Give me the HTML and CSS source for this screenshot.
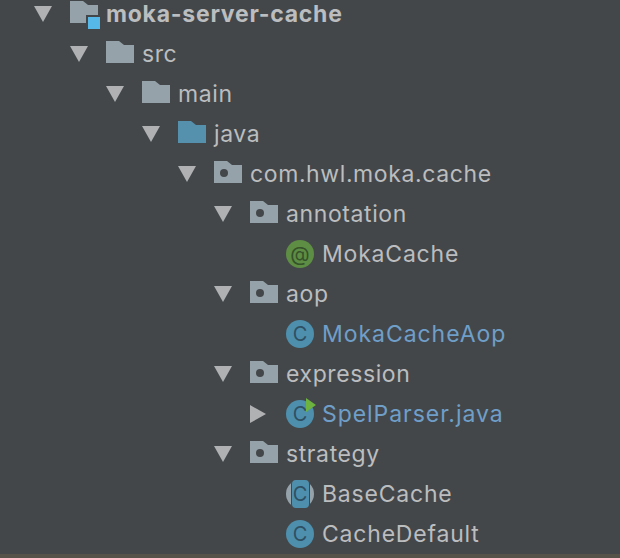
FILE: index.html
```html
<!DOCTYPE html>
<html lang="en">
<head>
<meta charset="utf-8">
<title>Project tree</title>
<link rel="stylesheet" href="styles.css">
</head>
<body>
<svg class="defs" width="0" height="0" aria-hidden="true">
  <defs>
    <path id="folder" d="M0 0H13L18 4H28V22H0Z"/>
    <path id="arrow-down" d="M0 0H18L9 16Z"/>
    <path id="arrow-right" d="M0 0L16 9L0 18Z"/>
  </defs>
</svg>
<main class="tree">
  <div class="row d0">
    <svg class="arrow" viewBox="0 0 18 16"><use href="#arrow-down"/></svg>
    <svg class="icon module" viewBox="0 0 32 30"><use href="#folder" class="fill-folder" y="2"/><rect x="16" y="16" width="16" height="16" class="fill-bg"/><rect x="18" y="18" width="12" height="12" class="fill-sky"/></svg>
    <span class="label strong">moka-server-cache</span>
  </div>
  <div class="row d1">
    <svg class="arrow" viewBox="0 0 18 16"><use href="#arrow-down"/></svg>
    <svg class="icon" viewBox="0 0 32 30"><use href="#folder" class="fill-folder" y="2"/></svg>
    <span class="label">src</span>
  </div>
  <div class="row d2">
    <svg class="arrow" viewBox="0 0 18 16"><use href="#arrow-down"/></svg>
    <svg class="icon" viewBox="0 0 32 30"><use href="#folder" class="fill-folder" y="2"/></svg>
    <span class="label">main</span>
  </div>
  <div class="row d3">
    <svg class="arrow" viewBox="0 0 18 16"><use href="#arrow-down"/></svg>
    <svg class="icon" viewBox="0 0 32 30"><use href="#folder" class="fill-source" y="2"/></svg>
    <span class="label">java</span>
  </div>
  <div class="row d4">
    <svg class="arrow" viewBox="0 0 18 16"><use href="#arrow-down"/></svg>
    <svg class="icon" viewBox="0 0 32 30"><use href="#folder" class="fill-folder" y="2"/><circle cx="10" cy="14" r="4" class="fill-bg"/></svg>
    <span class="label">com.hwl.moka.cache</span>
  </div>
  <div class="row d5">
    <svg class="arrow" viewBox="0 0 18 16"><use href="#arrow-down"/></svg>
    <svg class="icon" viewBox="0 0 32 30"><use href="#folder" class="fill-folder" y="2"/><circle cx="10" cy="14" r="4" class="fill-bg"/></svg>
    <span class="label">annotation</span>
  </div>
  <div class="row d6">
    <span class="arrow"></span>
    <span class="badge annotation">@</span>
    <span class="label">MokaCache</span>
  </div>
  <div class="row d5">
    <svg class="arrow" viewBox="0 0 18 16"><use href="#arrow-down"/></svg>
    <svg class="icon" viewBox="0 0 32 30"><use href="#folder" class="fill-folder" y="2"/><circle cx="10" cy="14" r="4" class="fill-bg"/></svg>
    <span class="label">aop</span>
  </div>
  <div class="row d6">
    <span class="arrow"></span>
    <span class="badge">C</span>
    <span class="label changed">MokaCacheAop</span>
  </div>
  <div class="row d5">
    <svg class="arrow" viewBox="0 0 18 16"><use href="#arrow-down"/></svg>
    <svg class="icon" viewBox="0 0 32 30"><use href="#folder" class="fill-folder" y="2"/><circle cx="10" cy="14" r="4" class="fill-bg"/></svg>
    <span class="label">expression</span>
  </div>
  <div class="row d6">
    <svg class="arrow arrow-side" viewBox="0 0 16 18"><use href="#arrow-right"/></svg>
    <span class="badge runnable">C<svg class="run" viewBox="0 0 10 14"><path d="M0 0L10 7L0 14Z"/></svg></span>
    <span class="label changed">SpelParser.java</span>
  </div>
  <div class="row d5">
    <svg class="arrow" viewBox="0 0 18 16"><use href="#arrow-down"/></svg>
    <svg class="icon" viewBox="0 0 32 30"><use href="#folder" class="fill-folder" y="2"/><circle cx="10" cy="14" r="4" class="fill-bg"/></svg>
    <span class="label">strategy</span>
  </div>
  <div class="row d6">
    <span class="arrow"></span>
    <span class="badge abstract"><span class="abstract-core">C</span></span>
    <span class="label">BaseCache</span>
  </div>
  <div class="row d6">
    <span class="arrow"></span>
    <span class="badge">C</span>
    <span class="label">CacheDefault</span>
  </div>
</main>
<div class="edge"></div>
</body>
</html>
```

FILE: styles.css
```css
html, body {
  margin: 0;
  height: 100%;
  overflow: hidden;
  background: #44474a;
}
body {
  display: flex;
  flex-direction: column;
}
.defs { position: absolute; }
.tree {
  flex: 1;
  min-height: 0;
  margin-top: -6px;
  display: flex;
  flex-direction: column;
  font-family: Inter, "Liberation Sans", sans-serif;
  font-size: 23px;
  letter-spacing: 0.6px;
  color: #bbbdbf;
}
.edge {
  height: 4px;
  flex: none;
  background: #55524a;
}
.row {
  height: 40px;
  flex: none;
  display: flex;
  align-items: center;
}
.d0 { padding-left: 34px; }
.d1 { padding-left: 70px; }
.d2 { padding-left: 106px; }
.d3 { padding-left: 142px; }
.d4 { padding-left: 178px; }
.d5 { padding-left: 214px; }
.d6 { padding-left: 250px; }
.d6 .label { letter-spacing: 0.8px; }
.d6 .changed { letter-spacing: 0.95px; color: #6f9fc9; }
.arrow {
  width: 18px;
  height: 16px;
  flex: none;
  margin-right: 18px;
  fill: #afb1b3;
}
.arrow-side { width: 16px; height: 18px; margin-right: 20px; }
.icon {
  width: 32px;
  height: 30px;
  flex: none;
  margin-right: 4px;
}
.fill-folder { fill: #95a2aa; }
.fill-source { fill: #5590ad; }
.fill-bg { fill: #44474a; }
.fill-sky { fill: #56b8e8; }
.label { white-space: nowrap; }
.strong { font-weight: 700; letter-spacing: 0.75px; }
.badge {
  position: relative;
  width: 28px;
  height: 28px;
  flex: none;
  margin-right: 8px;
  border-radius: 50%;
  background: #4d8fad;
  color: #2f5063;
  font-size: 20px;
  font-weight: 400;
  letter-spacing: 0;
  line-height: 28px;
  text-align: center;
}
.annotation { background: #5d8e44; color: #35522a; }
.abstract {
  background: #95a2aa;
  display: flex;
  justify-content: center;
}
.abstract-core {
  width: 17px;
  height: 28px;
  background: #4d8fad;
  border-radius: 4px;
  box-shadow: 0 0 0 1px #44474a;
}
.run {
  position: absolute;
  left: 20px;
  top: -2px;
  width: 10px;
  height: 14px;
  fill: #6cb33f;
}
```
